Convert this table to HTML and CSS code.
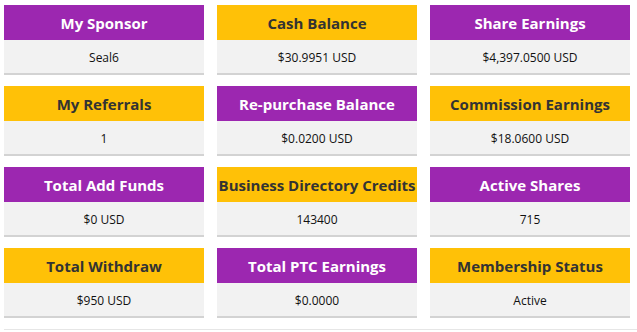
FILE: index.html
```html
<!DOCTYPE html>
<html>
<head>
<meta charset="utf-8">
<link rel="stylesheet" href="styles.css">
</head>
<body>
<div class="page">
  <div class="grid">
    <div class="card"><div class="head purple">My Sponsor</div><div class="val">Seal6</div></div>
    <div class="card"><div class="head yellow">Cash Balance</div><div class="val">$30.9951 USD</div></div>
    <div class="card"><div class="head purple">Share Earnings</div><div class="val">$4,397.0500 USD</div></div>

    <div class="card"><div class="head yellow">My Referrals</div><div class="val">1</div></div>
    <div class="card"><div class="head purple">Re-purchase Balance</div><div class="val">$0.0200 USD</div></div>
    <div class="card"><div class="head yellow">Commission Earnings</div><div class="val">$18.0600 USD</div></div>

    <div class="card"><div class="head purple">Total Add Funds</div><div class="val">$0 USD</div></div>
    <div class="card"><div class="head yellow">Business Directory Credits</div><div class="val">143400</div></div>
    <div class="card"><div class="head purple">Active Shares</div><div class="val">715</div></div>

    <div class="card"><div class="head yellow">Total Withdraw</div><div class="val">$950 USD</div></div>
    <div class="card"><div class="head purple">Total PTC Earnings</div><div class="val">$0.0000</div></div>
    <div class="card"><div class="head yellow">Membership Status</div><div class="val">Active</div></div>
  </div>
  <div class="rule"></div>
</div>
</body>
</html>
```

FILE: styles.css
```css
html, body {
  margin: 0;
  padding: 0;
  background: #ffffff;
}
.page {
  padding: 5px 0 0 4px;
  font-family: "Open Sans", "Liberation Sans", sans-serif;
}
.grid {
  display: grid;
  grid-template-columns: 200px 200px 200px;
  column-gap: 13px;
  row-gap: 11px;
}
.card {
  display: flex;
  flex-direction: column;
}
.head {
  height: 35px;
  display: flex;
  align-items: center;
  justify-content: center;
  font-weight: 700;
  font-size: 15px;
  white-space: nowrap;
}
.purple {
  background: #9c27b0;
  color: #ffffff;
}
.yellow {
  background: #ffc107;
  color: #333333;
}
.val {
  height: 35px;
  padding-top: 1px;
  box-sizing: border-box;
  background: #f2f2f2;
  border-bottom: 2px solid #d3d3d3;
  display: flex;
  align-items: center;
  justify-content: center;
  font-size: 12px;
  color: #111111;
}
.rule {
  margin-top: 11px;
  border-top: 1px solid #e6e6e6;
}
```
